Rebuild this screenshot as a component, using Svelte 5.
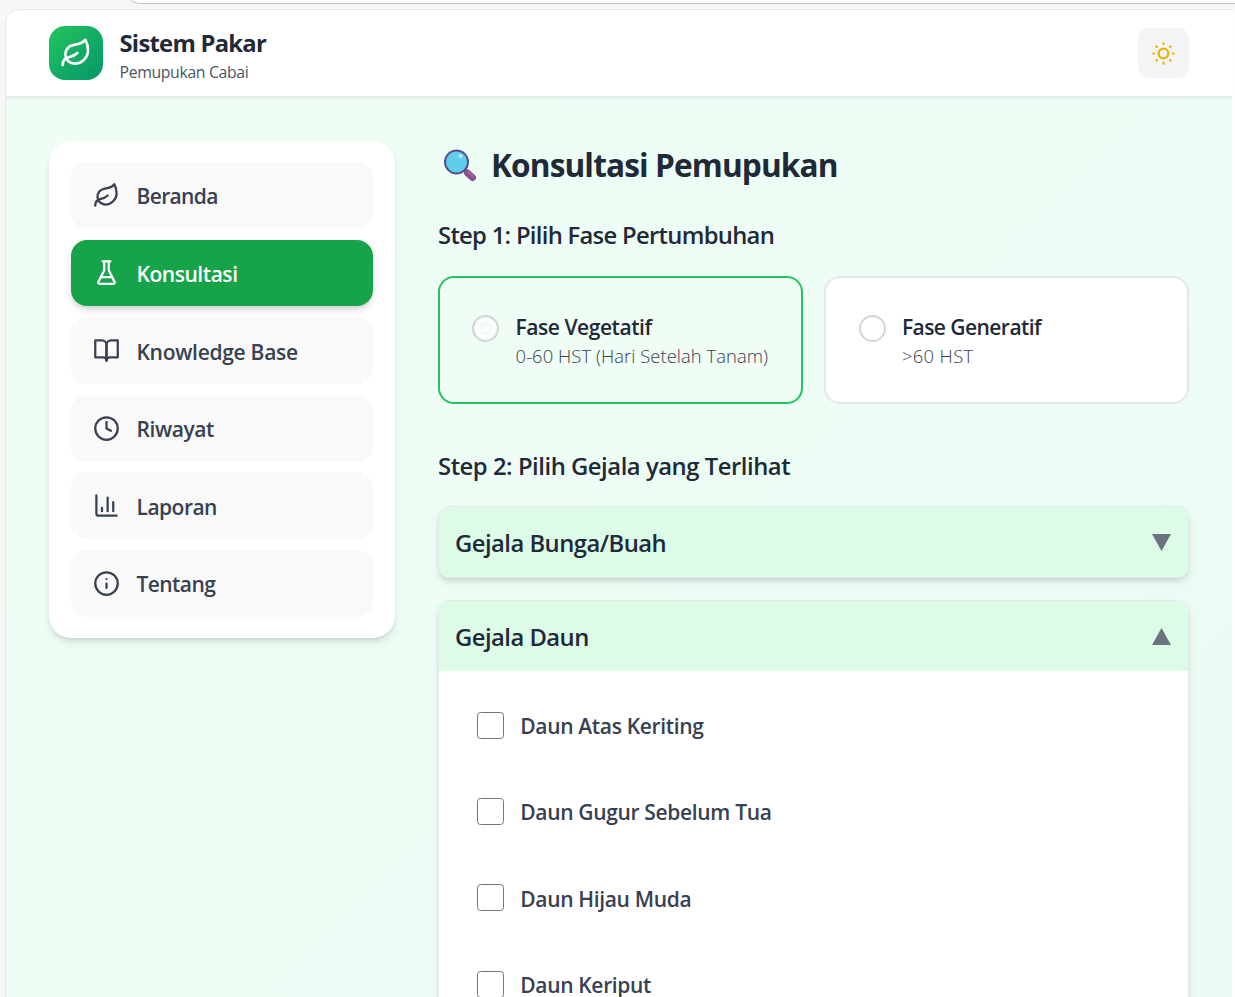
<script>
  const nav = [
    { label: 'Beranda', icon: 'leaf', track: -0.65 },
    { label: 'Konsultasi', icon: 'flask', track: -0.45 },
    { label: 'Knowledge Base', icon: 'book', track: -0.28 },
    { label: 'Riwayat', icon: 'clock', track: -0.4 },
    { label: 'Laporan', icon: 'chart', track: -0.52 },
    { label: 'Tentang', icon: 'info', track: -0.58 }
  ];
  const phases = [
    { name: 'Fase Vegetatif', track: -0.45, desc: '0-60 HST (Hari Setelah Tanam)', descTrack: 0.05 },
    { name: 'Fase Generatif', track: -0.55, desc: '>60 HST', descTrack: 0.35 }
  ];
  const groups = [
    { name: 'Gejala Bunga/Buah', items: [] },
    { name: 'Gejala Daun', items: ['Daun Atas Keriting', 'Daun Gugur Sebelum Tua', 'Daun Hijau Muda', 'Daun Keriput'] }
  ];
  let page = $state('Konsultasi');
  let phase = $state('Fase Vegetatif');
  let open = $state('Gejala Daun');
</script>

{#snippet icon(name)}
  <svg class="icon" viewBox="0 0 24 24" fill="none" stroke="currentColor" stroke-width="2" stroke-linecap="round" stroke-linejoin="round">
    {#if name === 'leaf'}
      <path d="M11 20A7 7 0 0 1 9.8 6.1C15.5 5 17 4.48 19 2c1 2 2 4.18 2 8 0 5.5-4.78 10-10 10Z" />
      <path d="M2 21c0-3 1.85-5.36 5.08-6C9.5 14.52 12 13 13 12" />
    {:else if name === 'flask'}
      <path d="M10 2v7.53a2 2 0 0 1-.21.9L4.72 20.55a1 1 0 0 0 .9 1.45h12.76a1 1 0 0 0 .9-1.45l-5.07-10.13a2 2 0 0 1-.21-.89V2" />
      <path d="M8.5 2h7M7 16h10" />
    {:else if name === 'book'}
      <path d="M2 3h6a4 4 0 0 1 4 4v14a3 3 0 0 0-3-3H2z" />
      <path d="M22 3h-6a4 4 0 0 0-4 4v14a3 3 0 0 1 3-3h7z" />
    {:else if name === 'clock'}
      <circle cx="12" cy="12" r="10" />
      <path d="M12 6v6l4 2" />
    {:else if name === 'chart'}
      <path d="M3 3v16a2 2 0 0 0 2 2h16M18 17V9M13 17V5M8 17v-3" />
    {:else if name === 'info'}
      <circle cx="12" cy="12" r="10" />
      <path d="M12 16v-4M12 8h.01" />
    {:else if name === 'sun'}
      <circle cx="12" cy="12" r="4.3" />
      <path d="M12 3v.6M12 20.400v.6M3 12h.6M20.400 12h.6M5.700 5.700l.4.4M17.900 17.900l.4.4M5.700 18.300l.4-.4M17.900 6.100l.4-.4" />
    {/if}
  </svg>
{/snippet}

<div class="browser">
  <div class="toolbar"><div class="address"></div></div>
  <div class="view">
    <header>
      <div class="logo">{@render icon('leaf')}</div>
      <div class="brand">
        <h3>Sistem Pakar</h3>
        <p>Pemupukan Cabai</p>
      </div>
      <button class="theme" aria-label="Tema">{@render icon('sun')}</button>
    </header>
    <div class="body">
      <nav>
        {#each nav as n}
          <button class="link" class:active={page === n.label} onclick={() => (page = n.label)}>
            {@render icon(n.icon)}<span class="label" style="letter-spacing: {n.track}px">{n.label}</span>
          </button>
        {/each}
      </nav>
      <main>
        <div class="title">
          <svg class="lens" viewBox="0 0 34 34">
            <path d="M22 22l3 3" stroke="#4b3f78" stroke-width="4" />
            <path d="M24.500 24l5 4.500" stroke="#874f90" stroke-width="7" stroke-linecap="round" />
            <path d="M25.500 23l4.500 4" stroke="#a263a5" stroke-width="2.500" stroke-linecap="round" />
            <circle cx="13.500" cy="13" r="11.500" fill="#62cdea" stroke="#53508f" stroke-width="2" />
            <circle cx="17.500" cy="7" r="2" fill="#b5e9f7" />
          </svg>
          <h1>Konsultasi Pemupukan</h1>
        </div>
        <h2 class="first">Step 1: Pilih Fase Pertumbuhan</h2>
        <div class="phases">
          {#each phases as p}
            <button class="phase" class:chosen={phase === p.name} onclick={() => (phase = p.name)}>
              <span class="radio">
                {#if phase === p.name}
                  <svg viewBox="0 0 24 24" fill="none">
                    <circle cx="12" cy="12" r="9" stroke="#fff" stroke-width="3" />
                    <path d="M9 12.200l2.200 2.200 4-4.200" stroke="#fff" stroke-width="2.200" />
                  </svg>
                {/if}
              </span>
              <span class="text">
                <span class="name" style="letter-spacing: {p.track}px">{p.name}</span>
                <span class="desc" style="letter-spacing: {p.descTrack}px">{p.desc}</span>
              </span>
            </button>
          {/each}
        </div>
        <h2 class="second">Step 2: Pilih Gejala yang Terlihat</h2>
        {#each groups as g}
          <section>
            <button class="fold" onclick={() => (open = open === g.name ? '' : g.name)}>
              <span class="group">{g.name}</span>
              <svg class="arrow" viewBox="0 0 19 17"><path d={open === g.name ? 'M0 17L9.500 0L19 17z' : 'M0 0H19L9.500 17z'} /></svg>
            </button>
            {#if open === g.name}
              <div class="items">
                {#each g.items as s}
                  <div class="item"><span class="box"></span><span class="label">{s}</span></div>
                {/each}
              </div>
            {/if}
          </section>
        {/each}
      </main>
    </div>
  </div>
</div>

<style>
  :global(body) { background: #f7f7f7; }
  * { box-sizing: border-box; margin: 0; }
  button { font: inherit; color: inherit; border: 0; text-align: left; cursor: pointer; }
  .browser { width: 1235px; height: 997px; overflow: hidden; display: flex; flex-direction: column; font-family: "Open Sans", "Noto Sans", sans-serif; color: #1f2937; background: linear-gradient(90deg, #f7f7f7 50%, #fdfdfd 50%); }
  .toolbar { height: 9px; flex: none; overflow: hidden; background: #f7f7f7; }
  .address { height: 41px; margin: -37px -30px 0 123px; border: 1px solid #c4c4c4; border-radius: 18px; background: #fff; }
  .view { flex: 1; min-height: 0; margin: 0 3px 0 5px; border: 1px solid #e6e7e8; border-width: 1px 0 0 1px; border-radius: 14px 0 0 0; overflow: hidden; display: flex; flex-direction: column; background: #fff; }
  header { height: 87px; flex: none; display: flex; align-items: flex-start; padding: 16px 43px 0; background: #fff; border-bottom: 1px solid #e5e7eb; box-shadow: 0 1px 3px rgba(0, 0, 0, .08); z-index: 1; }
  .logo { width: 54px; height: 54px; border-radius: 16px; background: linear-gradient(135deg, #22c55e, #059669); color: #fff; display: grid; place-items: center; }
  .icon { width: 27px; height: 27px; flex: none; display: block; }
  .logo .icon { width: 32px; height: 32px; }
  .brand { margin: 1px 0 0 16.500px; }
  h3 { font-size: 23.800px; font-weight: 700; line-height: 33px; letter-spacing: -.74px; }
  p { font-size: 15.800px; line-height: 25px; letter-spacing: -.35px; color: #4b5563; }
  .theme { margin: 2px 0 0 auto; width: 51px; height: 50px; padding: 0; border-radius: 11px; background: #f3f4f6; color: #eab308; display: grid; place-items: center; }
  .body { flex: 1; min-height: 0; display: flex; align-items: flex-start; gap: 43px; padding: 44px 43px 0; background: linear-gradient(135deg, #f0fdf4, #ecfdf5 60%, #eafbf5); }
  nav { width: 346px; height: 497px; flex: none; padding: 21px 22px; border-radius: 22px; background: #fff; display: flex; flex-direction: column; gap: 10.800px; box-shadow: 0 5px 8px -1px rgba(0, 0, 0, .1), 0 3px 5px -2px rgba(0, 0, 0, .1); }
  .link { height: 66.800px; flex: none; display: flex; align-items: center; gap: 16.500px; padding: 0 22px; border-radius: 16px; background: #f9f9fa; color: #374151; }
  .label, .name { font-size: 21px; font-weight: 600; }
  .link .label { padding-top: 2px; }
  .link.active { background: #16a34a; color: #fff; box-shadow: 0 5px 8px -1px rgba(0, 0, 0, .12), 0 3px 5px -2px rgba(0, 0, 0, .12); }
  main { flex: 1; min-width: 0; }
  .title { display: flex; align-items: center; gap: 14px; padding-left: 5px; height: 44px; }
  .lens { width: 34px; height: 34px; margin-top: 5px; }
  h1 { font-size: 31.600px; font-weight: 700; line-height: 44px; letter-spacing: -.88px; padding-top: 3px; }
  h2, .group { font-size: 23.800px; font-weight: 600; line-height: 36px; letter-spacing: -.52px; }
  h2.first { margin-top: 32px; letter-spacing: -.7px; }
  .phases { display: grid; grid-template-columns: 1fr 1fr; gap: 21.600px; margin-top: 23px; }
  .phase { height: 128px; display: flex; align-items: flex-start; gap: 16.300px; padding: 32.500px 32px 0 32.300px; border: 2px solid #e5e7eb; border-radius: 16px; background: #fff; }
  .chosen { border-color: #22c55e; background: #f0fdf4; }
  .radio { width: 27px; height: 27px; margin-top: 4px; flex: none; border: 2px solid #d1d5db; border-radius: 50%; }
  .radio svg { display: block; width: 23px; height: 23px; }
  .text { display: flex; flex-direction: column; padding-top: 1px; }
  .name { line-height: 30px; }
  .desc { font-size: 18.400px; font-weight: 300; line-height: 28px; color: #374151; white-space: nowrap; }
  h2.second { margin: 44px 0 22px; letter-spacing: -.45px; }
  section { margin-bottom: 22px; border: 1px solid #e5e7eb; border-radius: 11px; overflow: hidden; background: #fff; box-shadow: 0 5px 8px -1px rgba(0, 0, 0, .1), 0 3px 5px -2px rgba(0, 0, 0, .1); }
  .fold { width: 100%; height: 70px; display: flex; align-items: center; justify-content: space-between; padding: 1px 17px 0 16px; background: #dcfce7; }
  .arrow { width: 19px; height: 17px; fill: #6b7280; }
  .items { display: flex; flex-direction: column; gap: 21.600px; padding: 22px 38px; height: 500px; }
  .item { height: 64.700px; flex: none; display: flex; align-items: center; gap: 16.300px; color: #374151; }
  .item .label { letter-spacing: -.34px; padding-top: 1.500px; }
  .box { width: 27px; height: 27px; border: 1.500px solid #767676; border-radius: 3.500px; background: #fff; }
</style>
